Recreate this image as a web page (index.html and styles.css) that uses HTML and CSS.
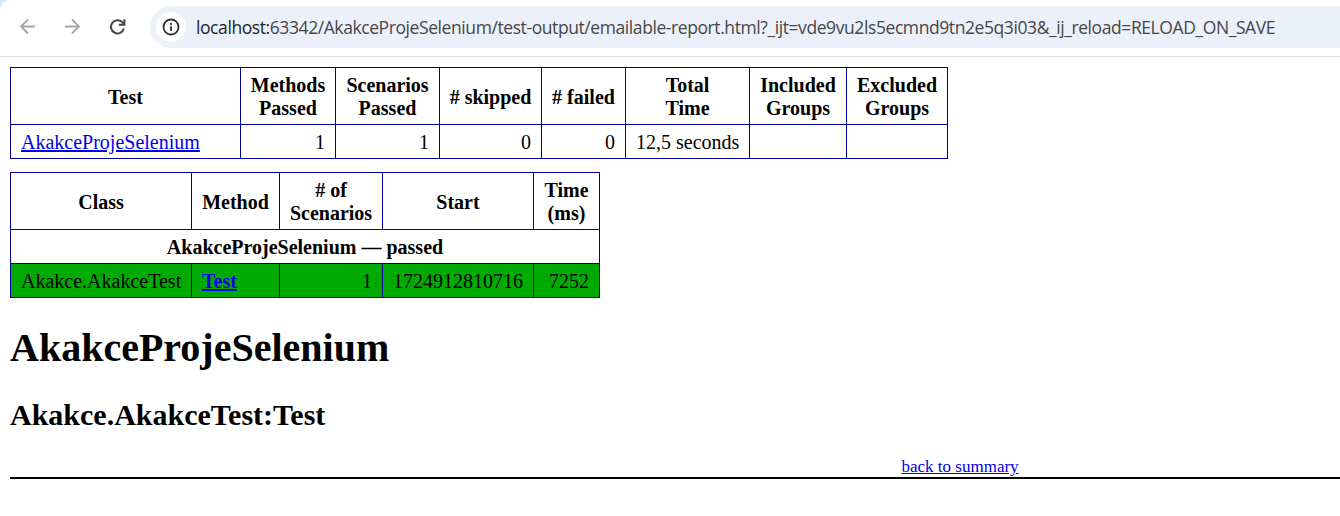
FILE: index.html
```html
<!DOCTYPE html>
<html lang="en">
<head>
<meta charset="utf-8">
<title>TestNG Report</title>
<link rel="stylesheet" href="styles.css">
</head>
<body>
<header class="toolbar">
  <div class="nav">
    <svg class="icon muted" viewBox="0 0 20 20"><path d="M17 9.5H3M10 2.5L3 9.5L10 16.5"/></svg>
    <svg class="icon muted" viewBox="0 0 20 20"><path d="M2 9.5h14M9 2.5L16 9.5L9 16.5"/></svg>
    <svg class="icon" viewBox="0 0 20 20"><path d="M15.9 11.6A6.6 6.6 0 1 1 14.1 5L16 7"/><path d="M16.4 2.2V7.8H10.8"/></svg>
  </div>
  <div class="address">
    <span class="site-info"><svg class="info" viewBox="0 0 20 20"><circle cx="10" cy="10" r="7.5"/><path d="M10 9.2V14M10 5.9v2"/></svg></span>
    <div class="url"><span class="host">localhost:</span>63342/AkakceProjeSelenium/test-output/emailable-report.html?_ijt=vde9vu2ls5ecmnd9tn2e5q3i03&amp;_ij_reload=RELOAD_ON_SAVE</div>
  </div>
</header>
<main class="report">
  <table class="summary">
    <colgroup><col class="w230"><col class="w95"><col class="w104"><col class="w102"><col class="w84"><col class="w124"><col class="w97"><col class="w101"></colgroup>
    <tr><th>Test</th><th>Methods<br>Passed</th><th>Scenarios<br>Passed</th><th># skipped</th><th># failed</th><th>Total<br>Time</th><th>Included<br>Groups</th><th>Excluded<br>Groups</th></tr>
    <tr><td><a href="#t0">AkakceProjeSelenium</a></td><td class="num">1</td><td class="num">1</td><td class="num">0</td><td class="num">0</td><td class="num">12,5 seconds</td><td></td><td></td></tr>
  </table>
  <table class="details" id="summary">
    <colgroup><col class="w181"><col class="w88"><col class="w103"><col class="w151"><col class="w66"></colgroup>
    <tr><th>Class</th><th>Method</th><th># of<br>Scenarios</th><th>Start</th><th>Time<br>(ms)</th></tr>
    <tr id="t0"><th colspan="5">AkakceProjeSelenium — passed</th></tr>
    <tr class="passed"><td>Akakce.AkakceTest</td><td><a class="strong" href="#m0">Test</a></td><td class="num">1</td><td class="num">1724912810716</td><td class="num">7252</td></tr>
  </table>
  <h1>AkakceProjeSelenium</h1>
  <h2 id="m0">Akakce.AkakceTest:Test</h2>
  <p class="totop"><a href="#summary">back to summary</a></p>
</main>
</body>
</html>
```
FILE: styles.css
```css
body {
  margin: 0;
  background: #fff;
  color: #000;
  font: 20px/23px "Liberation Serif", "Times New Roman", serif;
}
.toolbar {
  display: flex;
  height: 56px;
  border-bottom: 1px solid #e0e0e0;
  background: radial-gradient(circle at 10px 10px, #fff 9.5px, #d3e3fd 10.5px) 0 0 / 10px 10px no-repeat;
}
.nav {
  display: flex;
  flex: none;
  gap: 25px;
  padding: 17px 0 0 18px;
  width: 132px;
}
.icon {
  flex: none;
  width: 20px;
  height: 20px;
  fill: none;
  stroke: #474747;
  stroke-width: 2;
}
.muted { stroke: #a6a6a6; stroke-width: 1.8; }
.address {
  flex: 1;
  display: flex;
  align-items: center;
  height: 42px;
  margin-top: 6px;
  padding-left: 6px;
  box-sizing: border-box;
  border-radius: 21px 0 0 21px;
  background: #ecf0fa;
}
.site-info {
  display: flex;
  align-items: center;
  justify-content: center;
  width: 30px;
  height: 30px;
  border-radius: 50%;
  background: #fff;
}
.info {
  width: 20px;
  height: 20px;
  fill: none;
  stroke: #303030;
  stroke-width: 1.8;
}
.url {
  margin-left: 10px;
  font: 17.5px/24px "Open Sans", "Noto Sans", sans-serif;
  letter-spacing: -0.415px;
  color: #474747;
  white-space: nowrap;
}
.host { color: #1f1f1f; }
.report { padding: 10px 0 0 10px; }
table {
  table-layout: fixed;
  border-collapse: collapse;
  margin-bottom: 13px;
}
.summary { width: 938px; }
.details { width: 590px; margin-bottom: 27px; }
th, td {
  border: 1px solid #000099;
  padding: 6px 0 4px;
  height: 23px;
  white-space: nowrap;
}
th { text-align: center; }
td { padding: 6px 10px 4px; }
.num { text-align: right; }
.passed td { background: #00aa00; }
.strong { font-weight: bold; }
a { color: #0000ee; }
.w230 { width: 230px; }
.w95 { width: 95px; }
.w104 { width: 104px; }
.w102 { width: 102px; }
.w84 { width: 84px; }
.w124 { width: 124px; }
.w97 { width: 97px; }
.w101 { width: 101px; }
.w181 { width: 181px; }
.w88 { width: 88px; }
.w103 { width: 103px; }
.w151 { width: 151px; }
.w66 { width: 66px; }
h1 {
  margin: 0;
  font-size: 40px;
  line-height: 46px;
}
h2 {
  margin: 27px 0 0;
  font-size: 30px;
  line-height: 34px;
}
.totop {
  margin: 25px 0 0;
  height: 20px;
  border-bottom: 2px solid #000;
  font-size: 17px;
  line-height: 20px;
}
.totop a { margin-left: 891.5px; }
```
